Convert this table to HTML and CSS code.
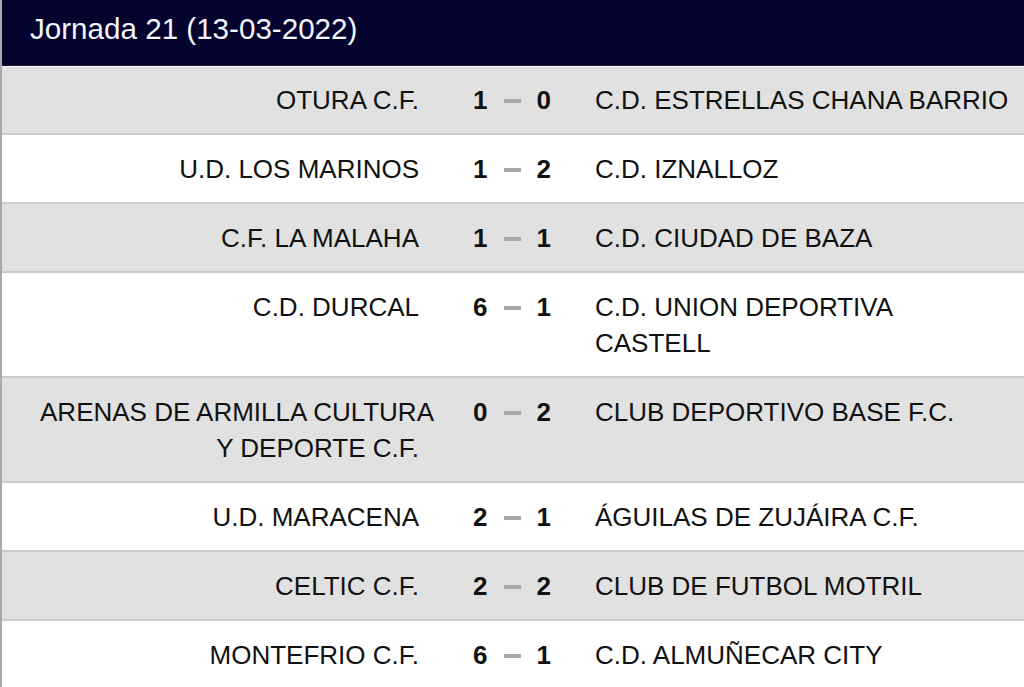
FILE: index.html
```html
<!DOCTYPE html>
<html lang="es">
<head>
<meta charset="utf-8">
<title>Jornada 21</title>
<link rel="stylesheet" href="styles.css">
</head>
<body>
<div class="board">
  <div class="header">Jornada 21 (13-03-2022)</div>
  <div class="row alt">
    <div class="home">OTURA C.F.</div>
    <div class="score"><b>1</b><span class="sep"></span><b>0</b></div>
    <div class="away">C.D. ESTRELLAS CHANA BARRIO</div>
  </div>
  <div class="row">
    <div class="home">U.D. LOS MARINOS</div>
    <div class="score"><b>1</b><span class="sep"></span><b>2</b></div>
    <div class="away">C.D. IZNALLOZ</div>
  </div>
  <div class="row alt">
    <div class="home">C.F. LA MALAHA</div>
    <div class="score"><b>1</b><span class="sep"></span><b>1</b></div>
    <div class="away">C.D. CIUDAD DE BAZA</div>
  </div>
  <div class="row">
    <div class="home">C.D. DURCAL</div>
    <div class="score"><b>6</b><span class="sep"></span><b>1</b></div>
    <div class="away">C.D. UNION DEPORTIVA<br>CASTELL</div>
  </div>
  <div class="row alt">
    <div class="home"><span class="line overhang">ARENAS DE ARMILLA CULTURA</span><span class="line">Y DEPORTE C.F.</span></div>
    <div class="score"><b>0</b><span class="sep"></span><b>2</b></div>
    <div class="away">CLUB DEPORTIVO BASE F.C.</div>
  </div>
  <div class="row">
    <div class="home">U.D. MARACENA</div>
    <div class="score"><b>2</b><span class="sep"></span><b>1</b></div>
    <div class="away">ÁGUILAS DE ZUJÁIRA C.F.</div>
  </div>
  <div class="row alt">
    <div class="home">CELTIC C.F.</div>
    <div class="score"><b>2</b><span class="sep"></span><b>2</b></div>
    <div class="away">CLUB DE FUTBOL MOTRIL</div>
  </div>
  <div class="row">
    <div class="home">MONTEFRIO C.F.</div>
    <div class="score"><b>6</b><span class="sep"></span><b>1</b></div>
    <div class="away">C.D. ALMUÑECAR CITY</div>
  </div>
</div>
</body>
</html>
```
FILE: styles.css
```css
* { box-sizing: border-box; }
html, body {
  margin: 0;
  padding: 0;
  background: #ffffff;
  overflow: hidden;
}
body {
  font-family: "Liberation Sans", Arial, sans-serif;
  color: #111111;
}
.board {
  width: 1024px;
  border-left: 2px solid #a9a9a9;
}
.header {
  height: 66px;
  background: #03032e;
  color: #f4f6ff;
  font-size: 29.6px;
  line-height: 57px;
  padding-left: 28px;
  box-shadow: inset 0 -1px 0 #1a1a44;
}
.row {
  display: grid;
  grid-template-columns: 450px 120px 1fr;
  padding: 15.5px 0;
  border-bottom: 2px solid #cbcbcb;
  background: #ffffff;
  font-size: 26px;
  line-height: 36px;
  white-space: nowrap;
}
.row.alt {
  background: #e1e1e1;
}
.header + .row { border-top: 1px solid #f2f2f2; padding-top: 14.5px; }
.home {
  text-align: right;
  padding-right: 33px;
}
.line { display: block; }
.overhang { margin-right: -15px; }
.score {
  display: flex;
  justify-content: center;
  align-items: flex-start;
  gap: 16px;
  font-weight: bold;
}
.score b { display: block; }
.sep {
  width: 17px;
  height: 4px;
  margin-top: 17px;
  background: #a8a8a8;
}
.away {
  padding-left: 23px;
}
```
